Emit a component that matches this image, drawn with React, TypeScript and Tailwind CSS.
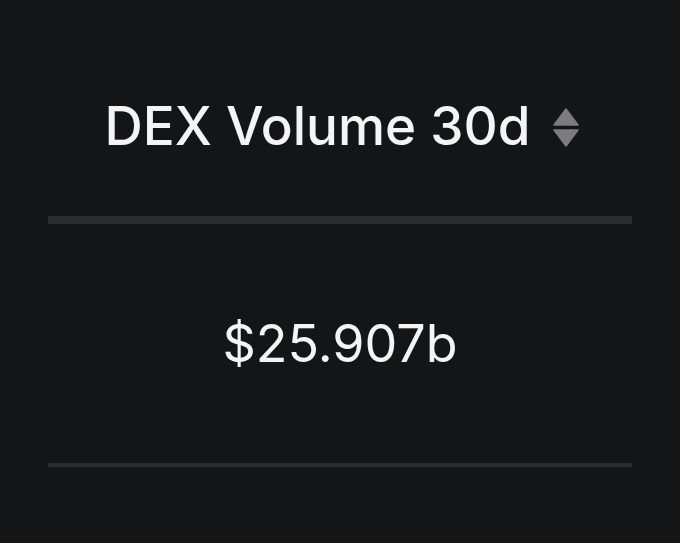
export default function App() {
  return (
    <div className="h-[543px] w-[680px] bg-[#141517] px-[48px] text-[#f4f4f5] font-['Inter',sans-serif]">
      <div className="flex items-center justify-center gap-[23px] border-b-[8px] border-[#2a2b2e] pt-[99px] pb-[63px] pl-[4px]">
        <span className="text-[53px] leading-[54px] font-medium">DEX Volume 30d</span>
        <svg width="26" height="40" viewBox="0 0 26 40" className="mt-[4px] text-[#7c7c7e]">
          <path d="M13 1 L25 17 L1 17 Z" fill="currentColor" stroke="currentColor" strokeWidth="1.5" strokeLinejoin="round" />
          <path d="M1 22 L25 22 L13 38 Z" fill="currentColor" stroke="currentColor" strokeWidth="1.5" strokeLinejoin="round" />
        </svg>
      </div>
      <div className="flex justify-center border-b-[4px] border-[#2c2d30] pt-[94px] pb-[93px]">
        <span className="text-[52px] leading-[52px]">$25.907b</span>
      </div>
    </div>
  );
}
